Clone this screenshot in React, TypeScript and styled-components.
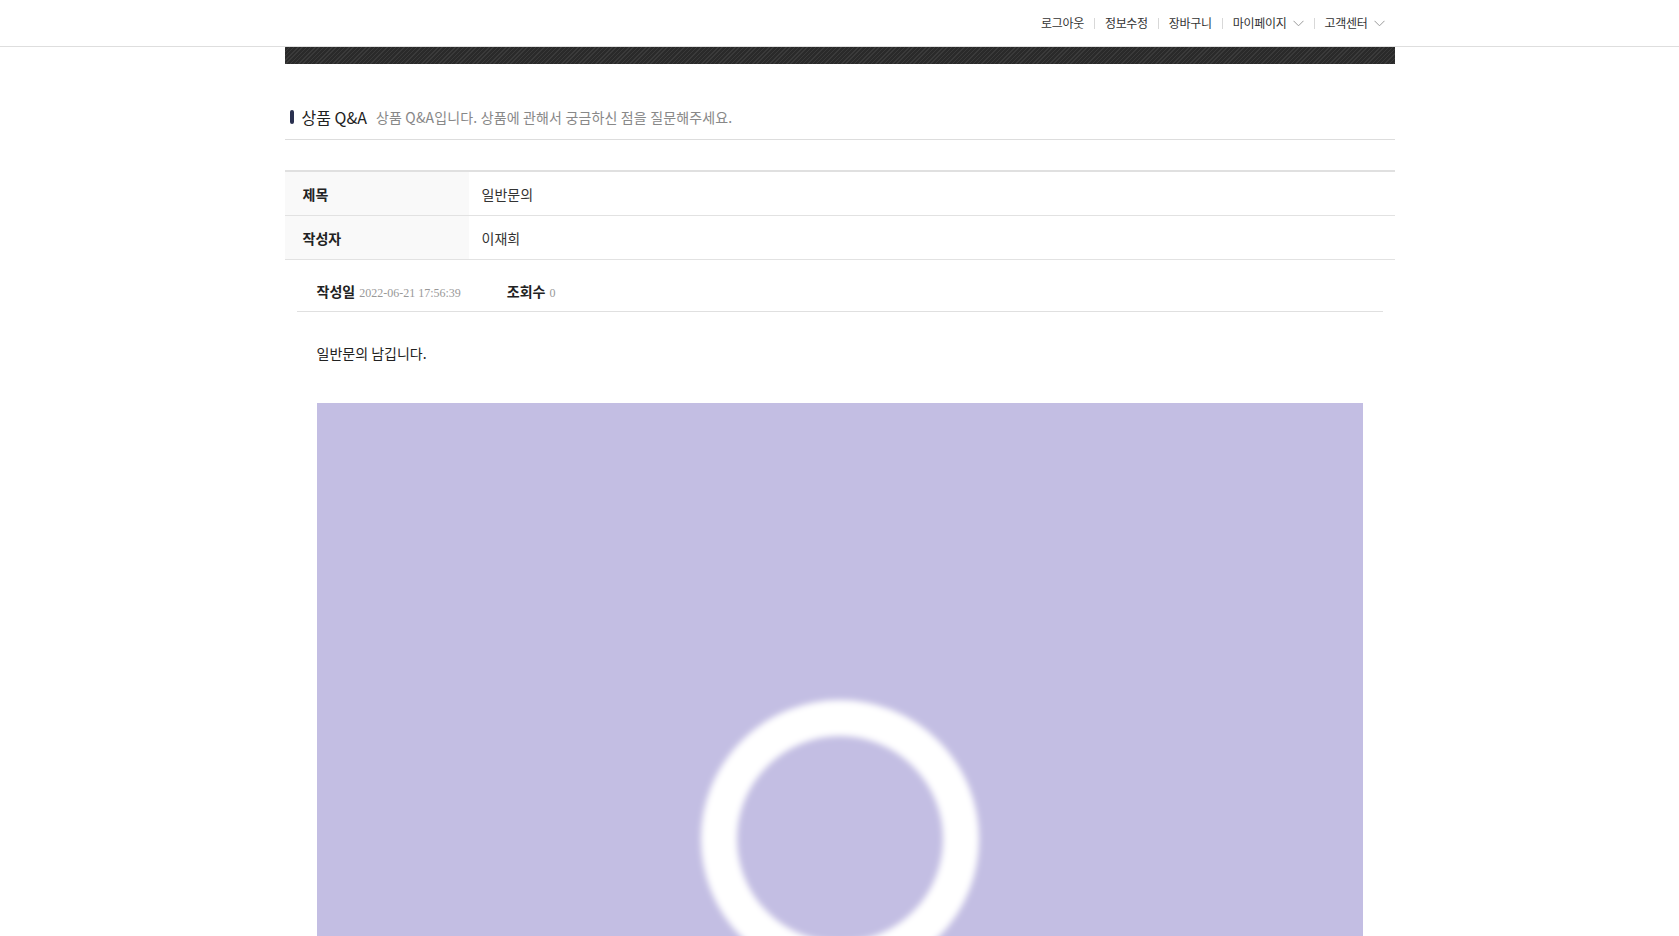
import React from "react";
import styled, { createGlobalStyle } from "styled-components";

const Global = createGlobalStyle`
  html, body { margin: 0; padding: 0; background: #fff; }
  body {
    font-family: "Noto Sans CJK KR", "Noto Sans", sans-serif;
    color: #222;
  }
  * { box-sizing: border-box; }
`;

const Header = styled.header`
  height: 47px;
  border-bottom: 1px solid #dedede;
`;

const Container = styled.div`
  width: 1110px;
  margin: 0 auto;
`;

const Nav = styled.nav`
  height: 46px;
  display: flex;
  justify-content: flex-end;
  align-items: center;
  padding-right: 10px;
`;

const NavItem = styled.a`
  display: flex;
  align-items: center;
  gap: 6px;
  font-size: 12px;
  color: #333;
  text-decoration: none;
  line-height: 16px;
  letter-spacing: -0.3px;
`;

const Sep = styled.span`
  width: 1px;
  height: 11px;
  background: #d8d8d8;
  margin: 0 10px;
`;

const Band = styled.div`
  height: 17px;
  background-color: #2e2e2e;
  background-image: repeating-linear-gradient(
    135deg,
    #3a3a3a 0px,
    #3a3a3a 1px,
    #2a2a2a 1px,
    #2a2a2a 3px
  );
`;

const TitleRow = styled.div`
  display: flex;
  align-items: center;
  padding: 39px 0 8px 5px;
  border-bottom: 1px solid #ddd;
  height: 76px;
`;

const TitleBar = styled.span`
  width: 4px;
  height: 14px;
  border-radius: 2px;
  background: #2a3150;
  margin-right: 8px;
`;

const TitleText = styled.h2`
  margin: 0;
  font-size: 16px;
  font-weight: 400;
  color: #222;
  line-height: 28px;
`;

const TitleSub = styled.span`
  margin-left: 9px;
  font-size: 14px;
  color: #888;
  line-height: 28px;
  letter-spacing: 0.15px;
`;

const Table = styled.div`
  margin-top: 30px;
  border-top: 2px solid #e0e0e0;
`;

const Row = styled.div`
  display: grid;
  grid-template-columns: 184px 1fr;
  height: 44px;
  border-bottom: 1px solid #e2e2e2;
`;

const Label = styled.div`
  background: #f9f9f9;
  padding-left: 18px;
  display: flex;
  align-items: center;
  font-size: 14px;
  font-weight: 700;
  color: #222;
`;

const Value = styled.div`
  padding-left: 13px;
  display: flex;
  align-items: center;
  font-size: 14px;
  color: #333;
`;

const Detail = styled.div`
  padding: 0 12px;
`;

const Meta = styled.div`
  display: flex;
  align-items: center;
  gap: 46px;
  padding: 22px 20px 9px;
  height: 52px;
  border-bottom: 1px solid #e0e0e0;
`;

const MetaItem = styled.div`
  display: flex;
  align-items: baseline;
  gap: 4px;
  line-height: 20px;
`;

const MetaLabel = styled.span`
  font-size: 14px;
  font-weight: 700;
  color: #222;
`;

const MetaValue = styled.span`
  font-family: "Liberation Serif", "DejaVu Serif", serif;
  font-size: 12px;
  color: #999;
`;

const Content = styled.div`
  padding: 31px 20px 0;
`;

const BodyText = styled.p`
  margin: 0;
  font-size: 14px;
  line-height: 20px;
  color: #222;
`;

const Picture = styled.div`
  margin-top: 40px;
  height: 872px;
  background: #c3bee3;
  display: flex;
  align-items: center;
  justify-content: center;
`;

const Chevron = () => (
  <svg width="11" height="7" viewBox="0 0 11 7" fill="none">
    <path d="M0.5 0.8 L5.5 5.8 L10.5 0.8" stroke="#9a9a9a" strokeWidth="1" />
  </svg>
);

const Ring = () => (
  <svg width="300" height="300" viewBox="0 0 300 300">
    <defs>
      <filter id="soft" x="-20%" y="-20%" width="140%" height="140%">
        <feGaussianBlur stdDeviation="3" />
      </filter>
    </defs>
    <circle
      cx="150"
      cy="150"
      r="121"
      fill="none"
      stroke="#ffffff"
      strokeWidth="36"
      filter="url(#soft)"
    />
  </svg>
);

export default function App() {
  return (
    <>
      <Global />
      <Header>
        <Container>
          <Nav>
            <NavItem>로그아웃</NavItem>
            <Sep />
            <NavItem>정보수정</NavItem>
            <Sep />
            <NavItem>장바구니</NavItem>
            <Sep />
            <NavItem>
              마이페이지 <Chevron />
            </NavItem>
            <Sep />
            <NavItem>
              고객센터 <Chevron />
            </NavItem>
          </Nav>
        </Container>
      </Header>
      <Container>
        <Band />
        <TitleRow>
          <TitleBar />
          <TitleText>상품 Q&amp;A</TitleText>
          <TitleSub>상품 Q&amp;A입니다. 상품에 관해서 궁금하신 점을 질문해주세요.</TitleSub>
        </TitleRow>
        <Table>
          <Row>
            <Label>제목</Label>
            <Value>일반문의</Value>
          </Row>
          <Row>
            <Label>작성자</Label>
            <Value>이재희</Value>
          </Row>
        </Table>
        <Detail>
          <Meta>
            <MetaItem>
              <MetaLabel>작성일</MetaLabel>
              <MetaValue>2022-06-21 17:56:39</MetaValue>
            </MetaItem>
            <MetaItem>
              <MetaLabel>조회수</MetaLabel>
              <MetaValue>0</MetaValue>
            </MetaItem>
          </Meta>
          <Content>
            <BodyText>일반문의 남깁니다.</BodyText>
            <Picture>
              <Ring />
            </Picture>
          </Content>
        </Detail>
      </Container>
    </>
  );
}
